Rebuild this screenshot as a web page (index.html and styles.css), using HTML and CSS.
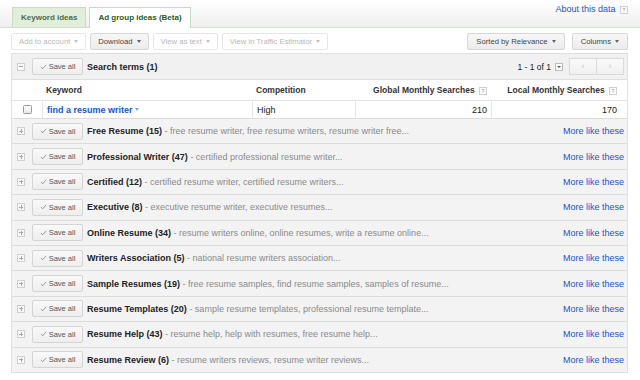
FILE: index.html
```html
<html>
    <head>
        <link rel="stylesheet" href="styles.css">
    </head>
    <body>
        <div class="topbar">
            <div class="tabs">
                <span class="tab">Keyword ideas</span>
                <span class="tab active">Ad group ideas (Beta)</span>
            </div>
            <a href="#" class="about">About this data <span class="help">?</span></a>
        </div>

        <div class="toolbar">
            <div class="btns">
                <span class="btn disabled">Add to account <i class="caret"></i></span>
                <span class="btn">Download <i class="caret"></i></span>
                <span class="btn disabled">View as text <i class="caret"></i></span>
                <span class="btn disabled">View in Traffic Estimator <i class="caret"></i></span>
            </div>
            <div class="btns">
                <span class="btn wide">Sorted by Relevance <i class="caret"></i></span>
                <span class="btn wide">Columns <i class="caret"></i></span>
            </div>
        </div>

        <div class="table">
            <div class="summary">
                <span class="tg"></span>
                <span class="save"><svg class="chk" viewBox="0 0 8 7" width="7" height="6"><path d="M1 3.5 L3 5.6 L7.2 1" fill="none" stroke="#808080" stroke-width="0.9"/></svg>Save all</span>
                <b class="title">Search terms (1)</b>
                <div class="pager">
                    <span>1 - 1 of 1</span>
                    <span class="dd"><i></i></span>
                    <span class="pbtns"><span class="pbtn">&lsaquo;</span><span class="pbtn">&rsaquo;</span></span>
                </div>
            </div>

            <div class="cols head">
                <span></span>
                <span>Keyword</span>
                <span>Competition</span>
                <span class="num">Global Monthly Searches <span class="help">?</span></span>
                <span class="num last">Local Monthly Searches <span class="help">?</span></span>
            </div>
            <div class="cols data">
                <span class="cb"><i></i></span>
                <span><a href="#" class="kw">find a resume writer</a> <i class="caret blue"></i></span>
                <span>High</span>
                <span class="num">210</span>
                <span class="num last">170</span>
            </div>

            <div class="groups">
                <div class="grow"><span class="tg plus"></span><span class="save"><svg class="chk" viewBox="0 0 8 7" width="7" height="6"><path d="M1 3.5 L3 5.6 L7.2 1" fill="none" stroke="#808080" stroke-width="0.9"/></svg>Save all</span><b>Free Resume (15)</b><span class="desc">&nbsp;- free resume writer, free resume writers, resume writer free...</span><a href="#" class="more">More like these</a></div>
                <div class="grow"><span class="tg plus"></span><span class="save"><svg class="chk" viewBox="0 0 8 7" width="7" height="6"><path d="M1 3.5 L3 5.6 L7.2 1" fill="none" stroke="#808080" stroke-width="0.9"/></svg>Save all</span><b>Professional Writer (47)</b><span class="desc">&nbsp;- certified professional resume writer...</span><a href="#" class="more">More like these</a></div>
                <div class="grow"><span class="tg plus"></span><span class="save"><svg class="chk" viewBox="0 0 8 7" width="7" height="6"><path d="M1 3.5 L3 5.6 L7.2 1" fill="none" stroke="#808080" stroke-width="0.9"/></svg>Save all</span><b>Certified (12)</b><span class="desc">&nbsp;- certified resume writer, certified resume writers...</span><a href="#" class="more">More like these</a></div>
                <div class="grow"><span class="tg plus"></span><span class="save"><svg class="chk" viewBox="0 0 8 7" width="7" height="6"><path d="M1 3.5 L3 5.6 L7.2 1" fill="none" stroke="#808080" stroke-width="0.9"/></svg>Save all</span><b>Executive (8)</b><span class="desc">&nbsp;- executive resume writer, executive resumes...</span><a href="#" class="more">More like these</a></div>
                <div class="grow"><span class="tg plus"></span><span class="save"><svg class="chk" viewBox="0 0 8 7" width="7" height="6"><path d="M1 3.5 L3 5.6 L7.2 1" fill="none" stroke="#808080" stroke-width="0.9"/></svg>Save all</span><b>Online Resume (34)</b><span class="desc">&nbsp;- resume writers online, online resumes, write a resume online...</span><a href="#" class="more">More like these</a></div>
                <div class="grow"><span class="tg plus"></span><span class="save"><svg class="chk" viewBox="0 0 8 7" width="7" height="6"><path d="M1 3.5 L3 5.6 L7.2 1" fill="none" stroke="#808080" stroke-width="0.9"/></svg>Save all</span><b>Writers Association (5)</b><span class="desc">&nbsp;- national resume writers association...</span><a href="#" class="more">More like these</a></div>
                <div class="grow"><span class="tg plus"></span><span class="save"><svg class="chk" viewBox="0 0 8 7" width="7" height="6"><path d="M1 3.5 L3 5.6 L7.2 1" fill="none" stroke="#808080" stroke-width="0.9"/></svg>Save all</span><b>Sample Resumes (19)</b><span class="desc">&nbsp;- free resume samples, find resume samples, samples of resume...</span><a href="#" class="more">More like these</a></div>
                <div class="grow"><span class="tg plus"></span><span class="save"><svg class="chk" viewBox="0 0 8 7" width="7" height="6"><path d="M1 3.5 L3 5.6 L7.2 1" fill="none" stroke="#808080" stroke-width="0.9"/></svg>Save all</span><b>Resume Templates (20)</b><span class="desc">&nbsp;- sample resume templates, professional resume template...</span><a href="#" class="more">More like these</a></div>
                <div class="grow"><span class="tg plus"></span><span class="save"><svg class="chk" viewBox="0 0 8 7" width="7" height="6"><path d="M1 3.5 L3 5.6 L7.2 1" fill="none" stroke="#808080" stroke-width="0.9"/></svg>Save all</span><b>Resume Help (43)</b><span class="desc">&nbsp;- resume help, help with resumes, free resume help...</span><a href="#" class="more">More like these</a></div>
                <div class="grow"><span class="tg plus"></span><span class="save"><svg class="chk" viewBox="0 0 8 7" width="7" height="6"><path d="M1 3.5 L3 5.6 L7.2 1" fill="none" stroke="#808080" stroke-width="0.9"/></svg>Save all</span><b>Resume Review (6)</b><span class="desc">&nbsp;- resume writers reviews, resume writer reviews...</span><a href="#" class="more">More like these</a></div>
            </div>
        </div>
    </body>
</html>
```

FILE: styles.css
```css
html, body {
    margin: 0;
    padding: 0;
    font-family: "Liberation Sans", Arial, Helvetica, sans-serif;
    font-size: 9px;
    color: #222;
    background: #fff;
}
a {
    color: #1a55cc;
    text-decoration: none;
}
.topbar {
    display: flex;
    justify-content: space-between;
    align-items: flex-end;
    height: 27px;
    padding: 0 12px;
    background: linear-gradient(#ffffff, #efefef);
    border-bottom: 1px solid #cfe2c8;
}
.tabs {
    display: flex;
    align-items: flex-end;
    gap: 3px;
}
.tab {
    height: 19px;
    line-height: 19px;
    padding: 0 8px;
    font-size: 8px;
    font-weight: bold;
    color: #4d6b42;
    background: #e2eedc;
    border: 1px solid #c8ddbf;
    border-bottom: none;
}
.tab.active {
    height: 20px;
    line-height: 20px;
    margin-bottom: -1px;
    background: #fff;
    color: #2d5a20;
}
.about {
    align-self: flex-start;
    margin-top: 4px;
    font-size: 9px;
}
.help {
    display: inline-block;
    width: 6px;
    height: 6px;
    line-height: 6px;
    border: 1px solid #d0d0d0;
    background: #fafafa;
    color: #999;
    font-size: 5px;
    font-weight: normal;
    text-align: center;
    vertical-align: middle;
    margin-left: 2px;
}
.toolbar {
    display: flex;
    justify-content: space-between;
    padding: 5px 12px 0 11px;
}
.btns {
    display: flex;
    gap: 4px;
}
.btns + .btns {
    gap: 7px;
}
.btn {
    display: flex;
    align-items: center;
    gap: 4px;
    height: 15px;
    padding: 0 7px;
    font-size: 7.7px;
    color: #444;
    background: linear-gradient(#f7f7f7, #ececec);
    border: 1px solid #d8d8d8;
    border-radius: 2px;
}
.btn.wide {
    padding: 0 8px;
}
.btn.disabled {
    color: #b8b8b8;
    background: #fff;
    border-color: #e6e6e6;
}
.caret {
    display: inline-block;
    width: 0;
    height: 0;
    border-left: 2.5px solid transparent;
    border-right: 2.5px solid transparent;
    border-top: 3px solid #666;
}
.disabled .caret {
    border-top-color: #c0c0c0;
}
.caret.blue {
    border-top-color: #8da2d8;
    vertical-align: middle;
    margin-left: 2px;
}
.table {
    margin: 3px 12px 0 11px;
    border: 1px solid #e0e0e0;
    border-bottom: none;
}
.summary {
    display: flex;
    align-items: center;
    height: 25px;
    padding: 0 3px 0 5px;
    background: #f1f1f1;
    border-bottom: 1px solid #dedede;
}
.tg {
    position: relative;
    flex: none;
    width: 6px;
    height: 6px;
    border: 1px solid #cfcfcf;
    background: #f9f9f9;
    margin-right: 7px;
}
.tg::before {
    content: '';
    position: absolute;
    left: 1px;
    right: 1px;
    top: 2.5px;
    height: 1px;
    background: #a8a8a8;
}
.tg.plus::after {
    content: '';
    position: absolute;
    top: 1px;
    bottom: 1px;
    left: 2.5px;
    width: 1px;
    background: #a8a8a8;
}
.save {
    display: flex;
    align-items: center;
    justify-content: center;
    gap: 2px;
    flex: none;
    width: 49px;
    height: 15px;
    margin-right: 4px;
    font-size: 7.5px;
    color: #555;
    background: linear-gradient(#f9f9f9, #eeeeee);
    border: 1px solid #d4d4d4;
    border-radius: 2px;
}
.title {
    font-size: 9px;
}
.pager {
    display: flex;
    align-items: center;
    margin-left: auto;
    font-size: 8.5px;
}
.dd {
    position: relative;
    width: 6px;
    height: 6px;
    border: 1px solid #bbb;
    background: #fff;
    margin: 0 6px 0 4px;
}
.dd i {
    position: absolute;
    left: 1px;
    top: 2px;
    border-left: 2px solid transparent;
    border-right: 2px solid transparent;
    border-top: 2px solid #555;
}
.pbtns {
    display: flex;
}
.pbtn {
    width: 26px;
    height: 15px;
    line-height: 14px;
    text-align: center;
    font-size: 9px;
    color: #c4c4c4;
    background: linear-gradient(#fafafa, #f0f0f0);
    border: 1px solid #dadada;
}
.pbtn + .pbtn {
    border-left: none;
}
.cols {
    display: grid;
    grid-template-columns: 30px 210px 103px 136px 1fr;
    align-items: center;
    background: #fff;
}
.cols > span {
    padding: 0 4px;
}
.cols .num {
    text-align: right;
}
.cols .last {
    padding-right: 10px;
}
.head {
    height: 20px;
    font-size: 8.5px;
    font-weight: bold;
    color: #333;
    border-bottom: 1px solid #e4e4e4;
}
.data {
    height: 17px;
    align-items: stretch;
    border-bottom: 1px solid #dcdcdc;
    font-size: 9px;
}
.data > span {
    display: flex;
    align-items: center;
    border-left: 1px solid #e6e6e6;
}
.data > span:first-child {
    border-left: none;
    justify-content: center;
}
.data > .num {
    justify-content: flex-end;
}
.cb i {
    display: block;
    width: 7px;
    height: 7px;
    border: 1px solid #9a9a9a;
    border-radius: 1.5px;
    background: linear-gradient(#fff, #e8e8e8);
}
.kw {
    font-weight: bold;
}
.grow {
    display: flex;
    align-items: center;
    height: 24.4px;
    padding: 0 3px 0 5px;
    background: #f3f3f3;
    border-bottom: 1px solid #dcdcdc;
    white-space: nowrap;
}
.grow b {
    font-size: 9px;
}
.desc {
    color: #8a8a8a;
}
.more {
    margin-left: auto;
}
```
